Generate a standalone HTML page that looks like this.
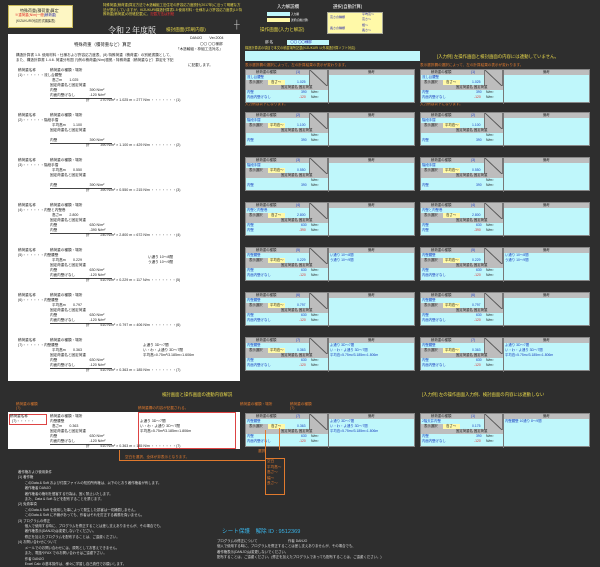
<!DOCTYPE html>
<html><head><meta charset="utf-8"><style>
*{margin:0;padding:0;box-sizing:border-box}
body{width:600px;height:562px;background:#2e2e2e;position:relative;overflow:hidden;font-family:"Liberation Sans","Noto Sans CJK JP",sans-serif;font-size:4px;line-height:5px;color:#fff}
.a{position:absolute;white-space:nowrap}
.sheet{position:absolute;left:8px;top:34px;width:232px;height:347px;background:#fff;color:#222}
.sheet .a{color:#222;font-size:3.6px}
.ul{border-bottom:0.6px solid #444}
.b{position:absolute;width:170px;height:34px;background:#bff7fb;border:0.6px solid #888;color:#1a3fbf;font-size:3.4px}
.b .a{color:#1a3fbf}
.b .hd{position:absolute;left:0;top:0;width:100%;height:5px;background:#bdbdbd}
.b .dg{position:absolute;left:63px;top:0;width:19px;height:16px;background:linear-gradient(to top right,#bdbdbd 47%,#555 49%,#555 51%,#bdbdbd 53%);border-left:0.5px solid #777;border-right:0.5px solid #777}
.b .r3{position:absolute;left:0;top:15px;width:82px;height:5px;background:#bdbdbd}
.b .sel{position:absolute;left:0;top:10px;width:22px;height:5px;background:#bdbdbd}
.b .yl{position:absolute;left:22px;top:10px;width:17px;height:5px;background:#fff9a8}
.b .rm{position:absolute;left:82px;top:0;width:0.6px;height:34px;background:#777}
.lab{color:#e07a2e;font-size:3.6px}
.yt{color:#e8d84a}
.note{color:#ddd;font-size:3.4px}
</style></head><body>

<div class="a" style="left:8px;top:5px;width:65px;height:23px;background:#fdf6c3;border:1px solid #c9b95a"></div>
<div class="a" style="left:20px;top:8px;color:#333;font-size:4px">特殊荷重(積荷重)算定</div>
<div class="a" style="left:15px;top:13px;color:#d22;font-size:3.4px">※重荷重(N/m)一般<span style="color:#22a">(積荷重)</span></div>
<div class="a" style="left:16px;top:19px;color:#333;font-size:3.2px">(KIZUKURI対応形式編集表)</div>
<div class="a yt" style="left:103px;top:3px;font-size:3.4px;line-height:4.6px;white-space:normal;width:140px">特殊荷重(積荷重)算定方法で木造軸組工法住宅の許容応力度設計(2017年)に沿って明確な方法が提示していますが、KIZUKURI構造計算書1.5 使用材料・仕様および許容応力度表(10 特殊荷重(積荷重)の別紙記載)に、<span style="color:#e33">記載方法は別紙</span></div>
<div class="a" style="left:108px;top:26px;font-size:8px;line-height:10px;font-family:'Liberation Serif','Noto Serif CJK SC',serif">令和２年度版</div>
<div class="a yt" style="left:166px;top:27px;font-size:4.6px">検討画面(印刷内容)</div>
<div class="a" style="left:234px;top:22px;font-size:8px;color:#ccc">┼</div>
<div class="a" style="left:277px;top:4px;font-size:4.4px">入力解説欄</div>
<div class="a" style="left:267px;top:12px;width:23px;height:4px;background:#bff7fb"></div>
<div class="a" style="left:267px;top:18px;width:23px;height:4px;background:#fff9a8"></div>
<div class="a" style="left:291px;top:12px;font-size:2.6px">入力欄</div>
<div class="a" style="left:291px;top:18px;font-size:2.6px">選択(自動計算)</div>
<div class="a yt" style="left:260px;top:27px;font-size:4.6px">操作画面(入力と解説)</div>
<div class="a" style="left:333px;top:4px;font-size:4.4px">選択(自動計算)</div>
<div class="a" style="left:327px;top:12px;width:56px;height:22px;background:#fff9a8;border:0.6px solid #aa9"></div>
<div class="a" style="left:330px;top:15px;color:#22a;font-size:3px">高さの種類</div>
<div class="a" style="left:330px;top:26px;color:#22a;font-size:3px">長さの種類</div>
<div class="a" style="left:362px;top:12px;color:#22a;font-size:3px;line-height:5.4px">平均高〜<br>高さ〜<br>幅〜<br>長さ〜</div>

<div class="sheet">
<div class="a" style="left:182px;top:2px">DANJO　　Ver.2004</div>
<div class="a" style="left:66px;top:8px;font-size:4.4px">特殊荷重（積荷重など）算定</div>
<div class="a" style="left:192px;top:8px">〇〇 〇〇様邸</div>
<div class="a" style="left:168px;top:13px">「木造軸組・枠組工法対応」</div>
<div class="a" style="left:8px;top:19px">構造計算書 1.5. 使用材料・仕様および許容応力度表、(8) 特殊荷重（積荷重）の別紙書類として、</div>
<div class="a" style="left:8px;top:24px">また、構造計算書 1.4.6. 荷重分布図 凡例の積荷重(N/m)根拠・特殊荷重（積荷重など）算定を下記</div>
<div class="a" style="left:180px;top:29px">に記載します。</div>
</div>

<div class="sheet" style="background:none;top:68px;height:0">
<div class="a" style="left:10px;top:0">積荷重名称</div><div class="a" style="left:42px;top:0">積荷重の種類・場所</div>
<div class="a" style="left:10px;top:5px">(1)・・・・・・流し台腰壁</div><div class="a" style="left:44px;top:10px">高さm　　1.025</div>
<div class="a" style="left:42px;top:15px">固定荷重名と固定荷重</div><div class="a" style="left:42px;top:20px">内壁　　　　　　　　　390 N/m²</div>
<div class="a ul" style="left:42px;top:25px;width:62px">内面内壁げなし　　　　-120 N/m²</div>
<div class="a" style="left:78px;top:30px">計　　　270 N/m² × 1.025 m = 277 N/m ・・・・・・・(1)</div>
</div>
<div class="sheet" style="background:none;top:113px;height:0">
<div class="a" style="left:10px;top:0">積荷重名称</div><div class="a" style="left:42px;top:0">積荷重の種類・場所</div>
<div class="a" style="left:10px;top:5px">(2)・・・・・・階段手摺</div><div class="a" style="left:44px;top:10px">平均高m　　1.100</div>
<div class="a" style="left:42px;top:15px">固定荷重名と固定荷重</div>
<div class="a ul" style="left:42px;top:25px;width:62px">内壁　　　　　　　　　390 N/m²</div>
<div class="a" style="left:78px;top:30px">計　　　390 N/m² × 1.100 m = 429 N/m ・・・・・・・(2)</div>
</div>
<div class="sheet" style="background:none;top:158px;height:0">
<div class="a" style="left:10px;top:0">積荷重名称</div><div class="a" style="left:42px;top:0">積荷重の種類・場所</div>
<div class="a" style="left:10px;top:5px">(3)・・・・・・階段手摺</div><div class="a" style="left:44px;top:10px">平均高m　　0.550</div>
<div class="a" style="left:42px;top:15px">固定荷重名と固定荷重</div>
<div class="a ul" style="left:42px;top:25px;width:62px">内壁　　　　　　　　　390 N/m²</div>
<div class="a" style="left:78px;top:30px">計　　　390 N/m² × 0.550 m = 215 N/m ・・・・・・・(3)</div>
</div>
<div class="sheet" style="background:none;top:203px;height:0">
<div class="a" style="left:10px;top:0">積荷重名称</div><div class="a" style="left:42px;top:0">積荷重の種類・場所</div>
<div class="a" style="left:10px;top:5px">(4)・・・・・・内壁と内壁巻</div><div class="a" style="left:44px;top:10px">高さm　　2.800</div>
<div class="a" style="left:42px;top:15px">固定荷重名と固定荷重</div><div class="a" style="left:42px;top:20px">内壁　　　　　　　　　630 N/m²</div>
<div class="a ul" style="left:42px;top:25px;width:62px">内壁　　　　　　　　　-390 N/m²</div>
<div class="a" style="left:78px;top:30px">計　　　240 N/m² × 2.800 m = 672 N/m ・・・・・・・(4)</div>
</div>
<div class="sheet" style="background:none;top:248px;height:0">
<div class="a" style="left:10px;top:0">積荷重名称</div><div class="a" style="left:42px;top:0">積荷重の種類・場所</div>
<div class="a" style="left:10px;top:5px">(5)・・・・・・内壁腰壁</div><div class="a" style="left:140px;top:7px">い通り 10〜8間</div>
<div class="a" style="left:44px;top:10px">平均高m　　0.229</div><div class="a" style="left:140px;top:12px">う通り 10〜9間</div>
<div class="a" style="left:42px;top:15px">固定荷重名と固定荷重</div><div class="a" style="left:42px;top:20px">内壁　　　　　　　　　630 N/m²</div>
<div class="a ul" style="left:42px;top:25px;width:62px">内面内壁げなし　　　　-120 N/m²</div>
<div class="a" style="left:78px;top:30px">計　　　510 N/m² × 0.229 m = 117 N/m ・・・・・・・(5)</div>
</div>
<div class="sheet" style="background:none;top:293px;height:0">
<div class="a" style="left:10px;top:0">積荷重名称</div><div class="a" style="left:42px;top:0">積荷重の種類・場所</div>
<div class="a" style="left:10px;top:5px">(6)・・・・・・内壁腰壁</div><div class="a" style="left:44px;top:10px">平均高m　　0.797</div>
<div class="a" style="left:42px;top:15px">固定荷重名と固定荷重</div><div class="a" style="left:42px;top:20px">内壁　　　　　　　　　630 N/m²</div>
<div class="a ul" style="left:42px;top:25px;width:62px">内面内壁げなし　　　　-120 N/m²</div>
<div class="a" style="left:78px;top:30px">計　　　510 N/m² × 0.797 m = 406 N/m ・・・・・・・(6)</div>
</div>
<div class="sheet" style="background:none;top:338px;height:0">
<div class="a" style="left:10px;top:0">積荷重名称</div><div class="a" style="left:42px;top:0">積荷重の種類・場所</div>
<div class="a" style="left:10px;top:5px">(7)・・・・・・内壁腰壁</div><div class="a" style="left:135px;top:5px">よ通り 3D〜7間</div>
<div class="a" style="left:44px;top:10px">平均高m　　0.363</div><div class="a" style="left:135px;top:10px">い・わ・よ通り 3D〜7間</div>
<div class="a" style="left:42px;top:15px">固定荷重名と固定荷重</div><div class="a" style="left:135px;top:15px">平均高=0.75m²/3.185m=1.606m</div>
<div class="a" style="left:42px;top:20px">内壁　　　　　　　　　630 N/m²</div>
<div class="a ul" style="left:42px;top:25px;width:62px">内面内壁げなし　　　　-120 N/m²</div>
<div class="a" style="left:78px;top:30px">計　　　510 N/m² × 0.363 m = 185 N/m ・・・・・・・(7)</div>
</div>

<div class="a" style="left:265px;top:40px;font-size:3.6px">部 名</div>
<div class="a" style="left:287px;top:40px;width:42px;height:5px;background:#bff7fb;color:#22a;font-size:3.4px">　〇〇 〇〇様邸</div>
<div class="a lab" style="left:245px;top:46px;color:#e8d84a;font-size:3.2px">構造計算書の項目で本文の積載場所記載(KIZUKURI 以外構造計算ソフト対応)</div>
<div class="a" style="left:245px;top:51px;width:175px;height:10px;background:#bff7fb"></div>
<div class="a yt" style="left:437px;top:54px;font-size:4.4px">[入力例] 左操作画面と検討画面の内容には連動していません。</div>

<div class="a lab" style="left:245px;top:63px">表示選択欄の選択によって、左の計算結果の表示が変わります。</div>
<div class="a lab" style="left:420px;top:63px">表示選択欄の選択によって、左の計算結果の表示が変わります。</div>
<div class="a lab" style="left:245px;top:102px">入力例は以下になります。</div>
<div class="a lab" style="left:420px;top:102px">入力例は以下になります。</div>

<div class="b" style="left:245px;top:69px"><div class="hd"></div><div class="sel"></div><div class="yl"></div><div class="r3"></div><div class="dg"></div><div class="rm"></div>
<div class="a" style="left:10px;top:0;color:#222">積荷重の種類</div><div class="a" style="left:50px;top:0">(1)</div><div class="a" style="left:122px;top:0;color:#222">備考</div>
<div class="a" style="left:1px;top:5px">流し台腰壁</div><div class="a" style="left:3px;top:10px;color:#222">表示選択</div><div class="a" style="left:25px;top:10px;color:#222">高さ〜</div><div class="a" style="left:51px;top:10px">1.025</div>
<div class="a" style="left:35px;top:15px;color:#222">固定荷重名 固定荷重</div>
<div class="a" style="left:1px;top:20px">内壁</div><div class="a" style="left:55px;top:20px">390</div><div class="a" style="left:65px;top:20px;color:#222">N/m²</div>
<div class="a" style="left:1px;top:25px">内面内壁げなし</div><div class="a" style="left:53px;top:25px;color:#d33">-120</div><div class="a" style="left:65px;top:25px;color:#222">N/m²</div></div>
<div class="b" style="left:420px;top:69px"><div class="hd"></div><div class="sel"></div><div class="yl"></div><div class="r3"></div><div class="dg"></div><div class="rm"></div>
<div class="a" style="left:10px;top:0;color:#222">積荷重の種類</div><div class="a" style="left:50px;top:0">(1)</div><div class="a" style="left:122px;top:0;color:#222">備考</div>
<div class="a" style="left:1px;top:5px">流し台腰壁</div><div class="a" style="left:3px;top:10px;color:#222">表示選択</div><div class="a" style="left:25px;top:10px;color:#222">高さ〜</div><div class="a" style="left:51px;top:10px">1.025</div>
<div class="a" style="left:35px;top:15px;color:#222">固定荷重名 固定荷重</div>
<div class="a" style="left:1px;top:20px">内壁</div><div class="a" style="left:55px;top:20px">390</div><div class="a" style="left:65px;top:20px;color:#222">N/m²</div>
<div class="a" style="left:1px;top:25px">内面内壁げなし</div><div class="a" style="left:53px;top:25px;color:#d33">-120</div><div class="a" style="left:65px;top:25px;color:#222">N/m²</div></div>

<div class="b" style="left:245px;top:112px"><div class="hd"></div><div class="sel"></div><div class="yl"></div><div class="r3"></div><div class="dg"></div><div class="rm"></div>
<div class="a" style="left:10px;top:0;color:#222">積荷重の種類</div><div class="a" style="left:50px;top:0">(2)</div><div class="a" style="left:122px;top:0;color:#222">備考</div>
<div class="a" style="left:1px;top:5px">階段手摺</div><div class="a" style="left:3px;top:10px;color:#222">表示選択</div><div class="a" style="left:24px;top:10px;color:#222">平均高〜</div><div class="a" style="left:51px;top:10px">1.100</div>
<div class="a" style="left:35px;top:15px;color:#222">固定荷重名 固定荷重</div>
<div class="a" style="left:65px;top:20px;color:#222">N/m²</div><div class="a" style="left:1px;top:25px">内壁</div><div class="a" style="left:55px;top:25px">390</div><div class="a" style="left:65px;top:25px;color:#222">N/m²</div></div>
<div class="b" style="left:420px;top:112px"><div class="hd"></div><div class="sel"></div><div class="yl"></div><div class="r3"></div><div class="dg"></div><div class="rm"></div>
<div class="a" style="left:10px;top:0;color:#222">積荷重の種類</div><div class="a" style="left:50px;top:0">(2)</div><div class="a" style="left:122px;top:0;color:#222">備考</div>
<div class="a" style="left:1px;top:5px">階段手摺</div><div class="a" style="left:3px;top:10px;color:#222">表示選択</div><div class="a" style="left:24px;top:10px;color:#222">平均高〜</div><div class="a" style="left:51px;top:10px">1.100</div>
<div class="a" style="left:35px;top:15px;color:#222">固定荷重名 固定荷重</div>
<div class="a" style="left:65px;top:20px;color:#222">N/m²</div><div class="a" style="left:1px;top:25px">内壁</div><div class="a" style="left:55px;top:25px">390</div><div class="a" style="left:65px;top:25px;color:#222">N/m²</div></div>

<div class="b" style="left:245px;top:157px"><div class="hd"></div><div class="sel"></div><div class="yl"></div><div class="r3"></div><div class="dg"></div><div class="rm"></div>
<div class="a" style="left:10px;top:0;color:#222">積荷重の種類</div><div class="a" style="left:50px;top:0">(3)</div><div class="a" style="left:122px;top:0;color:#222">備考</div>
<div class="a" style="left:1px;top:5px">階段手摺</div><div class="a" style="left:3px;top:10px;color:#222">表示選択</div><div class="a" style="left:24px;top:10px;color:#222">平均高〜</div><div class="a" style="left:51px;top:10px">0.550</div>
<div class="a" style="left:35px;top:15px;color:#222">固定荷重名 固定荷重</div>
<div class="a" style="left:65px;top:20px;color:#222">N/m²</div><div class="a" style="left:1px;top:25px">内壁</div><div class="a" style="left:55px;top:25px">390</div><div class="a" style="left:65px;top:25px;color:#222">N/m²</div></div>
<div class="b" style="left:420px;top:157px"><div class="hd"></div><div class="sel"></div><div class="yl"></div><div class="r3"></div><div class="dg"></div><div class="rm"></div>
<div class="a" style="left:10px;top:0;color:#222">積荷重の種類</div><div class="a" style="left:50px;top:0">(3)</div><div class="a" style="left:122px;top:0;color:#222">備考</div>
<div class="a" style="left:1px;top:5px">階段手摺</div><div class="a" style="left:3px;top:10px;color:#222">表示選択</div><div class="a" style="left:24px;top:10px;color:#222">平均高〜</div><div class="a" style="left:51px;top:10px">0.550</div>
<div class="a" style="left:35px;top:15px;color:#222">固定荷重名 固定荷重</div>
<div class="a" style="left:65px;top:20px;color:#222">N/m²</div><div class="a" style="left:1px;top:25px">内壁</div><div class="a" style="left:55px;top:25px">390</div><div class="a" style="left:65px;top:25px;color:#222">N/m²</div></div>

<div class="b" style="left:245px;top:202px"><div class="hd"></div><div class="sel"></div><div class="yl"></div><div class="r3"></div><div class="dg"></div><div class="rm"></div>
<div class="a" style="left:10px;top:0;color:#222">積荷重の種類</div><div class="a" style="left:50px;top:0">(4)</div><div class="a" style="left:122px;top:0;color:#222">備考</div>
<div class="a" style="left:1px;top:5px">内壁と内壁巻</div><div class="a" style="left:3px;top:10px;color:#222">表示選択</div><div class="a" style="left:25px;top:10px;color:#222">高さ〜</div><div class="a" style="left:51px;top:10px">2.800</div>
<div class="a" style="left:35px;top:15px;color:#222">固定荷重名 固定荷重</div>
<div class="a" style="left:1px;top:20px">内壁</div><div class="a" style="left:55px;top:20px">630</div><div class="a" style="left:65px;top:20px;color:#222">N/m²</div>
<div class="a" style="left:1px;top:25px">内壁</div><div class="a" style="left:53px;top:25px;color:#d33">-390</div><div class="a" style="left:65px;top:25px;color:#222">N/m²</div></div>
<div class="b" style="left:420px;top:202px"><div class="hd"></div><div class="sel"></div><div class="yl"></div><div class="r3"></div><div class="dg"></div><div class="rm"></div>
<div class="a" style="left:10px;top:0;color:#222">積荷重の種類</div><div class="a" style="left:50px;top:0">(4)</div><div class="a" style="left:122px;top:0;color:#222">備考</div>
<div class="a" style="left:1px;top:5px">内壁と内壁巻</div><div class="a" style="left:3px;top:10px;color:#222">表示選択</div><div class="a" style="left:25px;top:10px;color:#222">高さ〜</div><div class="a" style="left:51px;top:10px">2.800</div>
<div class="a" style="left:35px;top:15px;color:#222">固定荷重名 固定荷重</div>
<div class="a" style="left:1px;top:20px">内壁</div><div class="a" style="left:55px;top:20px">630</div><div class="a" style="left:65px;top:20px;color:#222">N/m²</div>
<div class="a" style="left:1px;top:25px">内壁</div><div class="a" style="left:53px;top:25px;color:#d33">-390</div><div class="a" style="left:65px;top:25px;color:#222">N/m²</div></div>

<div class="b" style="left:245px;top:247px"><div class="hd"></div><div class="sel"></div><div class="yl"></div><div class="r3"></div><div class="dg"></div><div class="rm"></div>
<div class="a" style="left:10px;top:0;color:#222">積荷重の種類</div><div class="a" style="left:50px;top:0">(5)</div><div class="a" style="left:122px;top:0;color:#222">備考</div>
<div class="a" style="left:1px;top:5px">内壁腰壁</div><div class="a" style="left:84px;top:5px">い通り 10〜8間</div><div class="a" style="left:84px;top:10px">う通り 10〜9間</div>
<div class="a" style="left:3px;top:10px;color:#222">表示選択</div><div class="a" style="left:24px;top:10px;color:#222">平均高〜</div><div class="a" style="left:51px;top:10px">0.229</div>
<div class="a" style="left:35px;top:15px;color:#222">固定荷重名 固定荷重</div>
<div class="a" style="left:1px;top:20px">内壁</div><div class="a" style="left:55px;top:20px">630</div><div class="a" style="left:65px;top:20px;color:#222">N/m²</div>
<div class="a" style="left:1px;top:25px">内面内壁げなし</div><div class="a" style="left:53px;top:25px;color:#d33">-120</div><div class="a" style="left:65px;top:25px;color:#222">N/m²</div></div>
<div class="b" style="left:420px;top:247px"><div class="hd"></div><div class="sel"></div><div class="yl"></div><div class="r3"></div><div class="dg"></div><div class="rm"></div>
<div class="a" style="left:10px;top:0;color:#222">積荷重の種類</div><div class="a" style="left:50px;top:0">(5)</div><div class="a" style="left:122px;top:0;color:#222">備考</div>
<div class="a" style="left:1px;top:5px">内壁腰壁</div><div class="a" style="left:84px;top:5px">い通り 10〜8間</div><div class="a" style="left:84px;top:10px">う通り 10〜9間</div>
<div class="a" style="left:3px;top:10px;color:#222">表示選択</div><div class="a" style="left:24px;top:10px;color:#222">平均高〜</div><div class="a" style="left:51px;top:10px">0.229</div>
<div class="a" style="left:35px;top:15px;color:#222">固定荷重名 固定荷重</div>
<div class="a" style="left:1px;top:20px">内壁</div><div class="a" style="left:55px;top:20px">630</div><div class="a" style="left:65px;top:20px;color:#222">N/m²</div>
<div class="a" style="left:1px;top:25px">内面内壁げなし</div><div class="a" style="left:53px;top:25px;color:#d33">-120</div><div class="a" style="left:65px;top:25px;color:#222">N/m²</div></div>

<div class="b" style="left:245px;top:292px"><div class="hd"></div><div class="sel"></div><div class="yl"></div><div class="r3"></div><div class="dg"></div><div class="rm"></div>
<div class="a" style="left:10px;top:0;color:#222">積荷重の種類</div><div class="a" style="left:50px;top:0">(6)</div><div class="a" style="left:122px;top:0;color:#222">備考</div>
<div class="a" style="left:1px;top:5px">内壁腰壁</div><div class="a" style="left:3px;top:10px;color:#222">表示選択</div><div class="a" style="left:24px;top:10px;color:#222">平均高〜</div><div class="a" style="left:51px;top:10px">0.797</div>
<div class="a" style="left:35px;top:15px;color:#222">固定荷重名 固定荷重</div>
<div class="a" style="left:1px;top:20px">内壁</div><div class="a" style="left:55px;top:20px">630</div><div class="a" style="left:65px;top:20px;color:#222">N/m²</div>
<div class="a" style="left:1px;top:25px">内面内壁げなし</div><div class="a" style="left:53px;top:25px;color:#d33">-120</div><div class="a" style="left:65px;top:25px;color:#222">N/m²</div></div>
<div class="b" style="left:420px;top:292px"><div class="hd"></div><div class="sel"></div><div class="yl"></div><div class="r3"></div><div class="dg"></div><div class="rm"></div>
<div class="a" style="left:10px;top:0;color:#222">積荷重の種類</div><div class="a" style="left:50px;top:0">(6)</div><div class="a" style="left:122px;top:0;color:#222">備考</div>
<div class="a" style="left:1px;top:5px">内壁腰壁</div><div class="a" style="left:3px;top:10px;color:#222">表示選択</div><div class="a" style="left:24px;top:10px;color:#222">平均高〜</div><div class="a" style="left:51px;top:10px">0.797</div>
<div class="a" style="left:35px;top:15px;color:#222">固定荷重名 固定荷重</div>
<div class="a" style="left:1px;top:20px">内壁</div><div class="a" style="left:55px;top:20px">630</div><div class="a" style="left:65px;top:20px;color:#222">N/m²</div>
<div class="a" style="left:1px;top:25px">内面内壁げなし</div><div class="a" style="left:53px;top:25px;color:#d33">-120</div><div class="a" style="left:65px;top:25px;color:#222">N/m²</div></div>

<div class="b" style="left:245px;top:337px"><div class="hd"></div><div class="sel"></div><div class="yl"></div><div class="r3"></div><div class="dg"></div><div class="rm"></div>
<div class="a" style="left:10px;top:0;color:#222">積荷重の種類</div><div class="a" style="left:50px;top:0">(7)</div><div class="a" style="left:122px;top:0;color:#222">備考</div>
<div class="a" style="left:1px;top:5px">内壁腰壁</div><div class="a" style="left:84px;top:5px">よ通り 3D〜7間</div><div class="a" style="left:84px;top:10px">い・わ・よ通り 3D〜7間</div><div class="a" style="left:84px;top:15px">平均高=5.75m²/3.185m=1.806m</div>
<div class="a" style="left:3px;top:10px;color:#222">表示選択</div><div class="a" style="left:24px;top:10px;color:#222">平均高〜</div><div class="a" style="left:51px;top:10px">0.363</div>
<div class="a" style="left:35px;top:15px;color:#222">固定荷重名 固定荷重</div>
<div class="a" style="left:1px;top:20px">内壁</div><div class="a" style="left:55px;top:20px">630</div><div class="a" style="left:65px;top:20px;color:#222">N/m²</div>
<div class="a" style="left:1px;top:25px">内面内壁げなし</div><div class="a" style="left:53px;top:25px;color:#d33">-120</div><div class="a" style="left:65px;top:25px;color:#222">N/m²</div></div>
<div class="b" style="left:420px;top:337px"><div class="hd"></div><div class="sel"></div><div class="yl"></div><div class="r3"></div><div class="dg"></div><div class="rm"></div>
<div class="a" style="left:10px;top:0;color:#222">積荷重の種類</div><div class="a" style="left:50px;top:0">(7)</div><div class="a" style="left:122px;top:0;color:#222">備考</div>
<div class="a" style="left:1px;top:5px">内壁腰壁</div><div class="a" style="left:84px;top:5px">よ通り 3D〜7間</div><div class="a" style="left:84px;top:10px">い・わ・よ通り 3D〜7間</div><div class="a" style="left:84px;top:15px">平均高=5.75m²/3.185m=1.806m</div>
<div class="a" style="left:3px;top:10px;color:#222">表示選択</div><div class="a" style="left:24px;top:10px;color:#222">平均高〜</div><div class="a" style="left:51px;top:10px">0.363</div>
<div class="a" style="left:35px;top:15px;color:#222">固定荷重名 固定荷重</div>
<div class="a" style="left:1px;top:20px">内壁</div><div class="a" style="left:55px;top:20px">630</div><div class="a" style="left:65px;top:20px;color:#222">N/m²</div>
<div class="a" style="left:1px;top:25px">内面内壁げなし</div><div class="a" style="left:53px;top:25px;color:#d33">-120</div><div class="a" style="left:65px;top:25px;color:#222">N/m²</div></div>

<div class="a yt" style="left:162px;top:392px;font-size:4.4px">検討画面と操作画面の連動内容解説</div>
<div class="a yt" style="left:422px;top:392px;font-size:4.4px">[入力例] 左の操作画面入力例、検討画面の内容には連動しない</div>
<div class="a lab" style="left:16px;top:402px;line-height:4.4px">積荷重の種類<br>(7)</div>
<div class="a lab" style="left:138px;top:406px">積荷重欄の内容が記載される。</div>
<div class="a lab" style="left:240px;top:402px">積荷重の種類・場所</div>
<div class="a lab" style="left:290px;top:402px;line-height:4.4px">積荷重の種類<br>(7)</div>
<div class="a" style="left:8px;top:412px;width:232px;height:37px;background:#fff"></div>
<div class="a" style="left:9px;top:414px;width:38px;height:11px;border:0.6px solid #d44"></div>
<div class="a" style="left:138px;top:412px;width:98px;height:37px;border:0.6px solid #d44"></div>
<div class="sheet" style="background:none;top:414px;height:0">
<div class="a" style="left:2px;top:0">積荷重名称</div><div class="a" style="left:42px;top:0">積荷重の種類・場所</div>
<div class="a" style="left:4px;top:5px">(7)・・・・・</div><div class="a" style="left:42px;top:5px">内壁腰壁</div>
<div class="a" style="left:132px;top:5px">よ通り 3D〜7間</div><div class="a" style="left:132px;top:10px">い・わ・よ通り 3D〜7間</div><div class="a" style="left:132px;top:15px">平均高=5.75m²/3.185m=1.806m</div>
<div class="a" style="left:44px;top:10px">高さm　　0.363</div><div class="a" style="left:42px;top:15px">固定荷重名と固定荷重</div>
<div class="a" style="left:42px;top:20px">内壁　　　　　　　　　630 N/m²</div><div class="a ul" style="left:42px;top:25px;width:62px">内面内壁げなし　　　　-120 N/m²</div>
<div class="a" style="left:78px;top:30px">計　　　510 N/m² × 0.363 m = 185 N/m ・・・・・・・(7)</div>
</div>
<div class="b" style="left:245px;top:413px"><div class="hd"></div><div class="sel"></div><div class="yl"></div><div class="r3"></div><div class="dg"></div><div class="rm"></div>
<div class="a" style="left:10px;top:0;color:#222">積荷重の種類</div><div class="a" style="left:50px;top:0">(7)</div><div class="a" style="left:122px;top:0;color:#222">備考</div>
<div class="a" style="left:1px;top:5px">内壁腰壁</div><div class="a" style="left:84px;top:5px">よ通り 3D〜7間</div><div class="a" style="left:84px;top:10px">い・わ・よ通り 3D〜7間</div><div class="a" style="left:84px;top:15px">平均高=5.75m²/3.185m=1.806m</div>
<div class="a" style="left:3px;top:10px;color:#222">表示選択</div><div class="a" style="left:25px;top:10px;color:#222">高さ〜</div><div class="a" style="left:51px;top:10px">0.363</div>
<div class="a" style="left:35px;top:15px;color:#222">固定荷重名 固定荷重</div>
<div class="a" style="left:1px;top:20px">内壁</div><div class="a" style="left:55px;top:20px">630</div><div class="a" style="left:65px;top:20px;color:#222">N/m²</div>
<div class="a" style="left:1px;top:25px">内面内壁げなし</div><div class="a" style="left:53px;top:25px;color:#d33">-120</div><div class="a" style="left:65px;top:25px;color:#222">N/m²</div></div>
<div class="b" style="left:420px;top:413px"><div class="hd"></div><div class="sel"></div><div class="yl"></div><div class="r3"></div><div class="dg"></div><div class="rm"></div>
<div class="a" style="left:10px;top:0;color:#222">積荷重の種類</div><div class="a" style="left:50px;top:0">(1)</div><div class="a" style="left:122px;top:0;color:#222">備考</div>
<div class="a" style="left:1px;top:5px">2階天井内壁</div><div class="a" style="left:84px;top:5px">内壁腰壁 10通り 8〜9間</div>
<div class="a" style="left:3px;top:10px;color:#222">表示選択</div><div class="a" style="left:25px;top:10px;color:#222">高さ〜</div><div class="a" style="left:51px;top:10px">0.175</div>
<div class="a" style="left:35px;top:15px;color:#222">固定荷重名 固定荷重</div>
<div class="a" style="left:1px;top:20px">内壁</div><div class="a" style="left:55px;top:20px">390</div><div class="a" style="left:65px;top:20px;color:#222">N/m²</div>
<div class="a" style="left:1px;top:25px">内面内壁げなし</div><div class="a" style="left:53px;top:25px;color:#d33">-120</div><div class="a" style="left:65px;top:25px;color:#222">N/m²</div></div>

<div class="a" style="left:119px;top:450px;width:0.8px;height:10px;background:#e07a2e"></div>
<div class="a" style="left:119px;top:460px;width:146px;height:0.8px;background:#e07a2e"></div>
<div class="a" style="left:265px;top:430px;width:0.8px;height:30px;background:#e07a2e"></div>
<div class="a" style="left:279px;top:428px;width:0.8px;height:22px;background:#e07a2e"></div>
<div class="a lab" style="left:125px;top:455px">空白を選択、全体が非表示となります。</div>
<div class="a lab" style="left:258px;top:449px">選択</div>
<div class="a lab" style="left:265px;top:458px;width:20px;height:37px;border:0.6px solid #e07a2e;line-height:5.6px;padding-left:1px">空白<br>平均高〜<br>高さ〜<br>幅〜<br>長さ〜</div>

<div class="a note" style="left:18px;top:470px;line-height:5.4px">著作権および使用条件<br>(1) 著作権<br>　　このData &amp; Soft および付属ファイルの知的所有権は、以下のとおり著作権者が有します。<br>　　著作権者 DANJO<br>　　著作権者の権利を侵害する行為は、固く禁止いたします。<br>　　また、Data &amp; Soft などを配布することを禁じます。<br>(2) 免責事項<br>　　このData &amp; Soft を使用した事によって発生した損害は一切補償しません。<br>　　このData &amp; Soft に不備があっても、作者はそれを訂正する義務を負いません。<br>(3) プログラムの修正<br>　　個人で使用する時に、プログラムを修正することは差し支えありませんが、その場合でも、<br>　　著作権表示(DANJO)は変更しないでください。<br>　　修正を加えたプログラムを配布することは、ご遠慮ください。<br>(4) お問い合わせについて<br>　　メールでのお問い合わせには、原則としてお答えできません。<br>　　また、電話やFAX でのお問い合わせはご遠慮下さい。<br>　　作者 DANJO<br>　　Excel Calc の基本操作は、様々に学習し自己責任でお願いします。</div>
<div class="a" style="left:222px;top:530px;color:#3ab4e8;font-size:5.6px">シート保護　解除 ID : 9512369</div>
<div class="a note" style="left:217px;top:539px;line-height:5.4px">プログラムの修正について　　　　　　　　　作者 DANJO<br>個人で使用する時に、プログラムを修正することは差し支えありませんが、その場合でも、<br>著作権表示(DANJO)は変更しないでください。<br>配布することは、ご遠慮ください。(修正を加えたプログラムであっても配布することは、ご遠慮ください。)</div>
</body></html>
